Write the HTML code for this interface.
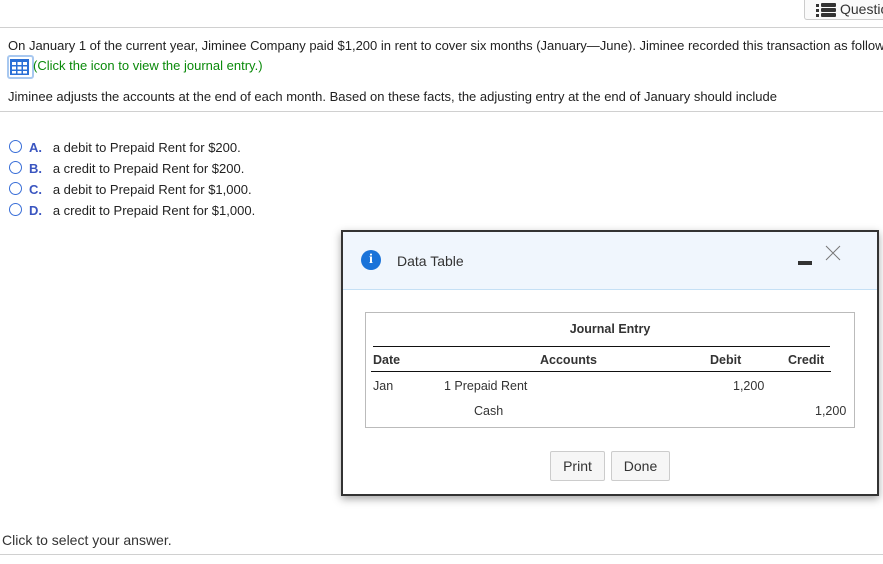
<!DOCTYPE html>
<html><head><style>
*{margin:0;padding:0;box-sizing:border-box}
body{width:883px;height:564px;background:#fff;font-family:"Liberation Sans",sans-serif;font-size:13px;color:#222;position:relative;overflow:hidden}
.a{position:absolute;white-space:nowrap}
.hr{position:absolute;left:0;width:883px;height:1px;background:#d0d0d0}
.rad{position:absolute;left:9px;width:13px;height:13px;border:1px solid #3a6fd8;border-radius:50%}
.lt{color:#3a55c0;font-weight:bold}
.btn{position:absolute;height:30px;border:1px solid #ccc;border-radius:2px;background:#f6f6f6;font-size:14px;line-height:28px;text-align:center;color:#333}
.d{font-size:12.5px}
</style></head><body>
<div class="a" style="left:804px;top:0;width:90px;height:20px;border:1px solid #ccc;border-top:none;border-radius:0 0 3px 3px;background:#fafafa"></div>
<div class="a" style="left:816px;top:3px;width:20px;height:14px">
<div style="position:absolute;left:0;top:1px;width:3px;height:3px;background:#333"></div><div style="position:absolute;left:5px;top:0;width:15px;height:4px;background:#333;border-radius:1px"></div>
<div style="position:absolute;left:0;top:6px;width:3px;height:3px;background:#333"></div><div style="position:absolute;left:5px;top:5px;width:15px;height:4px;background:#333;border-radius:1px"></div>
<div style="position:absolute;left:0;top:11px;width:3px;height:3px;background:#333"></div><div style="position:absolute;left:5px;top:10px;width:15px;height:4px;background:#333;border-radius:1px"></div>
</div>
<div class="a" style="left:840px;top:1px;font-size:14px;color:#333">Questio</div>
<div class="hr" style="top:27px"></div>
<div class="a" style="left:8px;top:38px">On January 1 of the current year, Jiminee Company paid $1,200 in rent to cover six months (January—June). Jiminee recorded this transaction as follows:</div>
<div class="a" style="left:7px;top:55px;width:27px;height:24px;border:2px solid #a8c8f0;border-radius:3px"></div>
<svg class="a" style="left:10px;top:59px" width="19" height="16"><rect x="0" y="0" width="19" height="16" fill="#2a6fd6"/><g fill="#fff"><rect x="2" y="3" width="4" height="3"/><rect x="7.5" y="3" width="4" height="3"/><rect x="13" y="3" width="4" height="3"/><rect x="2" y="7.5" width="4" height="3"/><rect x="7.5" y="7.5" width="4" height="3"/><rect x="13" y="7.5" width="4" height="3"/><rect x="2" y="12" width="4" height="2.5"/><rect x="7.5" y="12" width="4" height="2.5"/><rect x="13" y="12" width="4" height="2.5"/></g></svg>
<div class="a" style="left:33px;top:58px;color:#0a8a0a">(Click the icon to view the journal entry.)</div>
<div class="a" style="left:8px;top:89px">Jiminee adjusts the accounts at the end of each month. Based on these facts, the adjusting entry at the end of January should include</div>
<div class="hr" style="top:111px"></div>
<div class="rad" style="top:140px"></div><div class="a" style="left:29px;top:140px"><span class="lt">A.</span>&nbsp;&nbsp; a debit to Prepaid Rent for $200.</div>
<div class="rad" style="top:161px"></div><div class="a" style="left:29px;top:161px"><span class="lt">B.</span>&nbsp;&nbsp; a credit to Prepaid Rent for $200.</div>
<div class="rad" style="top:182px"></div><div class="a" style="left:29px;top:182px"><span class="lt">C.</span>&nbsp;&nbsp; a debit to Prepaid Rent for $1,000.</div>
<div class="rad" style="top:203px"></div><div class="a" style="left:29px;top:203px"><span class="lt">D.</span>&nbsp;&nbsp; a credit to Prepaid Rent for $1,000.</div>

<div class="a d" style="left:341px;top:230px;width:538px;height:266px;border:2px solid #333;background:#fff;box-shadow:0 3px 8px rgba(0,0,0,.35)">
<div style="position:absolute;left:0;top:0;width:534px;height:58px;background:#f0f6fd;border-bottom:1px solid #c5e0f5"></div>
<div style="position:absolute;left:18px;top:18px;width:20px;height:20px;border-radius:50%;background:#1a73d9;color:#fff;font:bold 14px 'Liberation Serif',serif;text-align:center;line-height:20px">i</div>
<div class="a" style="left:54px;top:21px;font-size:14px;color:#333">Data Table</div>
<div style="position:absolute;left:455px;top:29px;width:14px;height:4px;background:#333"></div>
<svg style="position:absolute;left:482px;top:13px" width="16" height="16"><path d="M1 1L15 15M15 1L1 15" stroke="#777" stroke-width="1"/></svg>
<div style="position:absolute;left:22px;top:80px;width:490px;height:116px;border:1px solid #bbb">
<div class="a" style="left:0;width:488px;top:9px;text-align:center;font-weight:bold;color:#333">Journal Entry</div>
<div style="position:absolute;left:7px;top:33px;width:457px;height:1px;background:#111"></div>
<div class="a" style="left:7px;top:40px;font-weight:bold;color:#333">Date</div>
<div class="a" style="left:174px;top:40px;font-weight:bold;color:#333">Accounts</div>
<div class="a" style="left:344px;top:40px;font-weight:bold;color:#333">Debit</div>
<div class="a" style="left:422px;top:40px;font-weight:bold;color:#333">Credit</div>
<div style="position:absolute;left:5px;top:58px;width:460px;height:1px;background:#111"></div>
<div class="a" style="left:7px;top:66px;color:#333">Jan</div>
<div class="a" style="left:78px;top:66px;color:#333">1 Prepaid Rent</div>
<div class="a" style="left:367px;top:66px;color:#333">1,200</div>
<div class="a" style="left:108px;top:91px;color:#333">Cash</div>
<div class="a" style="left:449px;top:91px;color:#333">1,200</div>
</div>
<div class="btn" style="left:207px;top:219px;width:55px">Print</div>
<div class="btn" style="left:268px;top:219px;width:59px">Done</div>
</div>

<div class="a" style="left:2px;top:532px;font-size:14px;color:#333">Click to select your answer.</div>
<div class="hr" style="top:554px"></div>
</body></html>
